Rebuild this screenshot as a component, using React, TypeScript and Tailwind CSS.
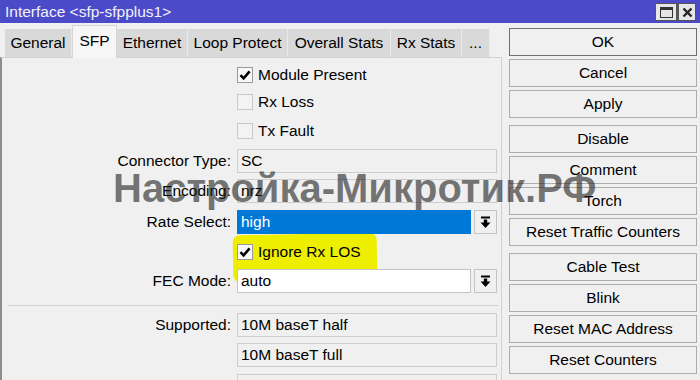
import React from "react";

const tabs = [
  { name: "General", w: "w-[67px]" },
  { name: "SFP", w: "w-[45px]", active: true },
  { name: "Ethernet", w: "w-[71px]" },
  { name: "Loop Protect", w: "w-[100px]" },
  { name: "Overall Stats", w: "w-[103px]" },
  { name: "Rx Stats", w: "w-[71px]" },
  { name: "...", w: "w-[28px]" },
];

const buttonGroups = [
  ["OK", "Cancel", "Apply"],
  ["Disable", "Comment", "Torch", "Reset Traffic Counters"],
  ["Cable Test", "Blink", "Reset MAC Address", "Reset Counters"],
];

function CheckBox({ checked }: { checked?: boolean }) {
  return (
    <div
      className={`w-[16px] h-[16px] border flex items-center justify-center ${
        checked ? "border-[#9a9a9a] bg-[#f8f8f8]" : "border-[#c9c9c9] bg-[#f3f3f3]"
      }`}
    >
      {checked && (
        <svg width="12" height="12" viewBox="0 0 12 12">
          <path d="M1.5 6.2 L4.6 9.3 L10.6 2.4" fill="none" stroke="#000" strokeWidth="2.6" />
        </svg>
      )}
    </div>
  );
}

function DropIcon() {
  return (
    <svg width="11" height="13" viewBox="0 0 11 13">
      <rect x="1" y="0.5" width="9" height="2" fill="#000" />
      <rect x="3.8" y="3.5" width="3.4" height="3.5" fill="#000" />
      <path d="M0.5 6.5 H10.5 L5.5 12 Z" fill="#000" />
    </svg>
  );
}

function Label({ text }: { text?: string }) {
  return <div className="w-[235px] shrink-0 text-right pr-[6px]">{text}</div>;
}

function CheckRow({ label, checked, mt }: { label: string; checked?: boolean; mt: string }) {
  return (
    <div className={`flex items-center h-[24px] ${mt}`}>
      <Label />
      <CheckBox checked={checked} />
      <span className="ml-[5px]">{label}</span>
    </div>
  );
}

function FieldRow({ label, value, mt }: { label?: string; value: string; mt: string }) {
  return (
    <div className={`flex items-center h-[24px] ${mt}`}>
      <Label text={label} />
      <div className="w-[260px] h-[24px] border border-[#cdcdcd] bg-[#f0f0f0] flex items-center pl-[3px]">
        {value}
      </div>
    </div>
  );
}

function SelectRow({ label, value, selected, mt }: { label: string; value: string; selected?: boolean; mt: string }) {
  return (
    <div className={`flex items-center h-[24px] ${mt}`}>
      <Label text={label} />
      <div
        className={`w-[234px] h-[24px] border flex items-center pl-[3px] ${
          selected ? "bg-[#0078d7] border-[#0078d7] text-white" : "bg-white border-[#c4c4c4]"
        }`}
      >
        {value}
      </div>
      <div className="ml-[3px] w-[23px] h-[24px] border border-[#c4c4c4] bg-[#f0f0f0] flex items-center justify-center">
        <DropIcon />
      </div>
    </div>
  );
}

export default function App() {
  return (
    <div className="relative w-[700px] h-[380px] overflow-hidden bg-[#f0f0f0] text-[15.5px] text-black font-['Liberation_Sans',Arial,sans-serif] leading-none">
      {/* title bar */}
      <div className="h-[23px] bg-[#4b4bc9] flex items-center justify-between pl-[5px] pr-[4px]">
        <span className="text-[#f2f2fb] text-[15.5px]">Interface &lt;sfp-sfpplus1&gt;</span>
        <div className="flex gap-[1px] self-start mt-[3px]">
          <div className="w-[22px] h-[18px] bg-[#e6e6e6] border border-[#555] flex items-center justify-center">
            <div className="w-[13px] h-[11px] border border-[#333] border-t-[3px]" />
          </div>
          <div className="w-[18px] h-[18px] bg-[#e6e6e6] border border-[#555] flex items-center justify-center">
            <svg width="11" height="11" viewBox="0 0 11 11">
              <path d="M1.5 1.5 L9.5 9.5 M9.5 1.5 L1.5 9.5" stroke="#222" strokeWidth="2.4" />
            </svg>
          </div>
        </div>
      </div>

      <div className="flex">
        {/* left: tabs + panel */}
        <div className="w-[502px] shrink-0">
          <div className="h-[34px] flex items-end pl-[5px]">
            {tabs.map((t) =>
              t.active ? (
                <div
                  key={t.name}
                  className={`${t.w} h-[33px] -mb-px relative z-10 bg-[#f6f6f6] border border-b-0 border-[#d6d6d6] flex items-center justify-center pb-[3px]`}
                >
                  {t.name}
                </div>
              ) : (
                <div
                  key={t.name}
                  className={`${t.w} h-[28px] bg-[#d9d9d9] border-r border-[#e9e9e9] flex items-center justify-center`}
                >
                  {t.name}
                </div>
              )
            )}
          </div>

          <div className="relative isolate h-[323px] border-t border-r border-[#d2d2d2] border-l-2 border-l-[#8e8e8e] bg-[#f0f0f0] pt-[5px]">
            {/* marker highlight */}
            <div className="absolute -z-10 left-[231px] top-[176px] w-[144px] h-[47px] bg-[#eeee00] rounded-[7px] -rotate-1" />

            <CheckRow label="Module Present" checked mt="mt-0" />
            <CheckRow label="Rx Loss" mt="mt-[3px]" />
            <CheckRow label="Tx Fault" mt="mt-[5px]" />
            <FieldRow label="Connector Type:" value="SC" mt="mt-[6px]" />
            <FieldRow label="Encoding:" value="nrz" mt="mt-[6px]" />
            <SelectRow label="Rate Select:" value="high" selected mt="mt-[7px]" />
            <CheckRow label="Ignore Rx LOS" checked mt="mt-[6px]" />
            <SelectRow label="FEC Mode:" value="auto" mt="mt-[5px]" />
            <div className="mt-[12px] ml-[6px] mr-[3px] h-px bg-[#d0d0d0]" />
            <FieldRow label="Supported:" value="10M baseT half" mt="mt-[7px]" />
            <FieldRow value="10M baseT full" mt="mt-[6px]" />
            <FieldRow value="" mt="mt-[7px]" />
          </div>
        </div>

        {/* right: buttons */}
        <div className="ml-[7px] w-[188px] pt-[5px] flex flex-col gap-[7px]">
          {buttonGroups.map((g, gi) => (
            <div key={gi} className="flex flex-col gap-[3px]">
              {g.map((b) => (
                <div
                  key={b}
                  className={`h-[28px] border bg-[#f0f0f0] flex items-center justify-center ${
                    b === "OK" ? "border-[#6e6e6e]" : "border-[#adadad]"
                  }`}
                >
                  {b}
                </div>
              ))}
            </div>
          ))}
        </div>
      </div>

      {/* watermark */}
      <div className="absolute left-[113px] top-[168px] text-[40px] leading-none font-bold text-[rgba(30,30,30,0.6)] whitespace-nowrap pointer-events-none">
        Настройка-Микротик.РФ
      </div>
    </div>
  );
}
